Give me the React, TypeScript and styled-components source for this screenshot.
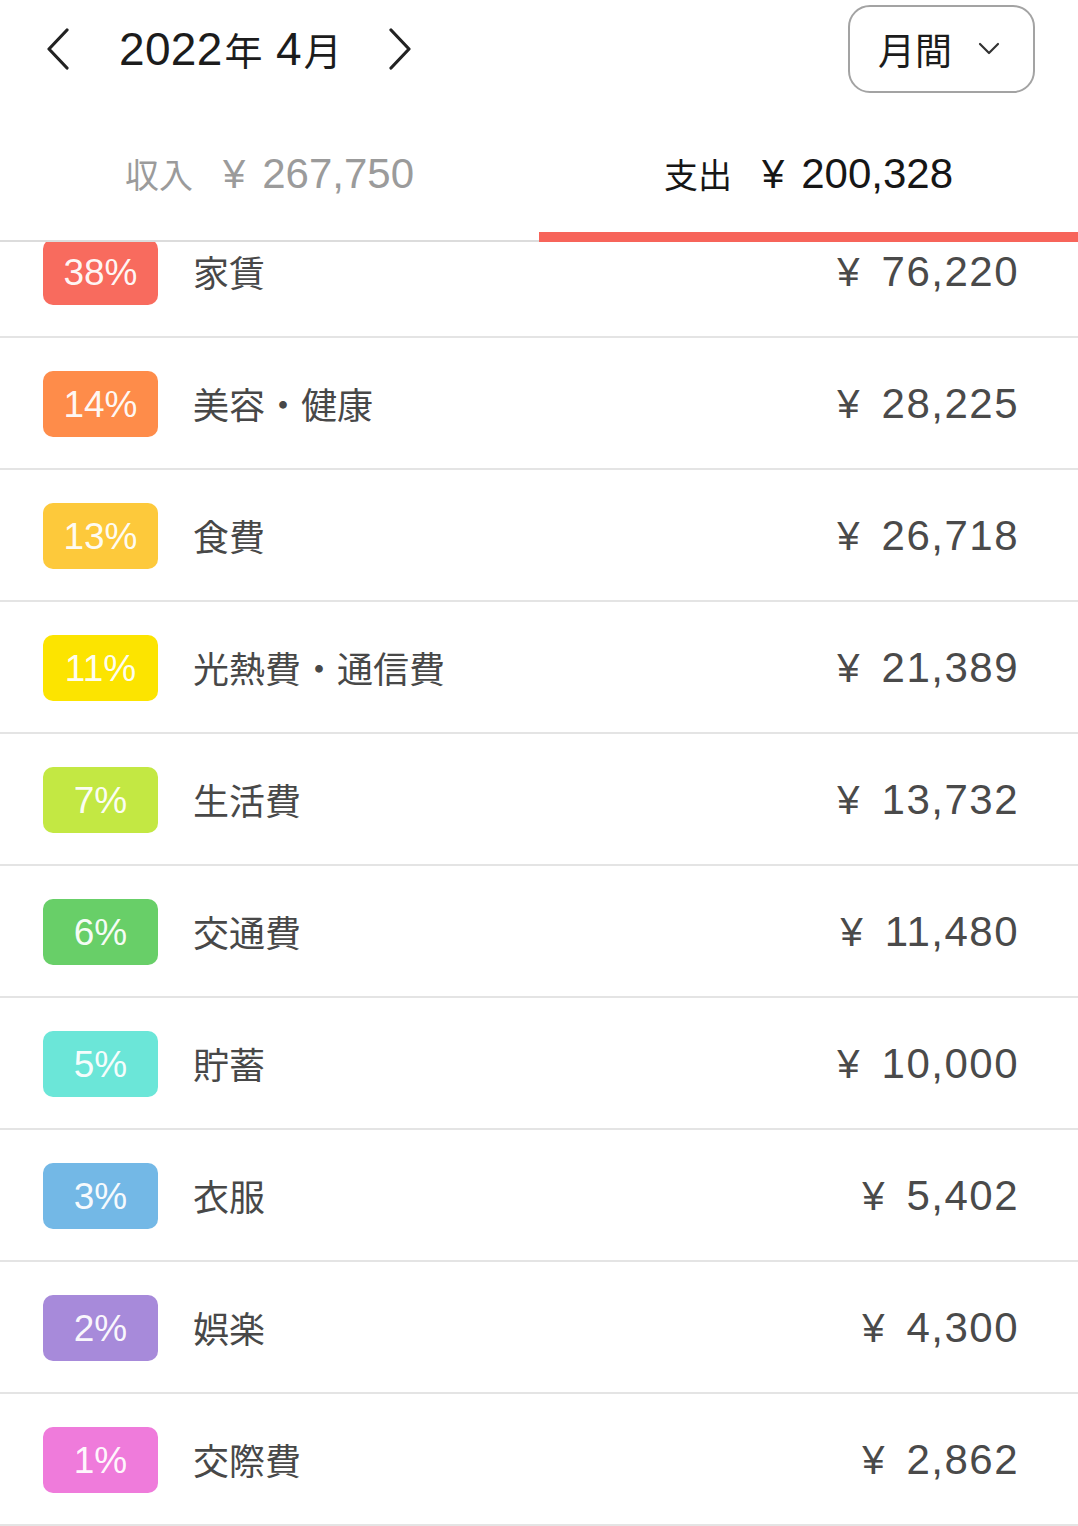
import React, { useLayoutEffect, useRef } from "react";
import styled, { createGlobalStyle } from "styled-components";

const GlobalStyle = createGlobalStyle`
  html, body { margin: 0; padding: 0; background: #ffffff; }
  body {
    font-family: "Liberation Sans", "Noto Sans CJK JP", sans-serif;
    -webkit-font-smoothing: antialiased;
  }
  * { box-sizing: border-box; }
`;

const Page = styled.div`
  display: flex;
  flex-direction: column;
  height: 100vh;
  background: #fff;
`;

const Header = styled.header`
  display: flex;
  align-items: center;
  height: 98px;
  padding: 0 43px 0 46px;
  flex-shrink: 0;
`;

const NavButton = styled.button`
  display: flex;
  align-items: center;
  justify-content: center;
  border: none;
  background: none;
  padding: 0;
  width: 24px;
  height: 42px;
  color: #222;
  cursor: pointer;
`;

const Title = styled.h1`
  margin: 0 46px 0 49px;
  font-weight: 400;
  font-size: 46px;
  line-height: 1;
  color: #1c1c1c;
  letter-spacing: 0.3px;
`;

const Unit = styled.span`
  font-family: "Noto Sans CJK JP", sans-serif;
  font-size: 38px;
  margin-left: 2px;
`;

const Spacer = styled.div`
  flex: 1;
`;

const PeriodSelect = styled.button`
  display: flex;
  align-items: center;
  width: 187px;
  height: 88px;
  padding: 0 0 0 28px;
  border: 2.5px solid #a3a3a3;
  border-radius: 22px;
  background: #fff;
  color: #1c1c1c;
  font-family: "Noto Sans CJK JP", sans-serif;
  font-size: 37px;
  line-height: 1;
  gap: 26px;
  cursor: pointer;
`;

const Tabs = styled.nav`
  display: flex;
  height: 144px;
  border-bottom: 2px solid #dcdcdc;
  flex-shrink: 0;
`;

const Tab = styled.div<{ $active?: boolean }>`
  position: relative;
  flex: 1;
  display: flex;
  align-items: center;
  justify-content: center;
  padding-top: 10px;
  color: ${(p) => (p.$active ? "#161616" : "#9b9b9b")};
  &::after {
    content: "";
    display: ${(p) => (p.$active ? "block" : "none")};
    position: absolute;
    left: 0;
    right: 0;
    bottom: -2px;
    height: 10px;
    background: #f7645a;
  }
`;

const TabLabel = styled.span`
  font-family: "Noto Sans CJK JP", sans-serif;
  font-size: 34px;
  line-height: 1;
  margin-right: 30px;
`;

const TabYen = styled.span`
  font-size: 40px;
  line-height: 1;
  margin-right: 17px;
`;

const TabAmount = styled.span`
  font-size: 42px;
  line-height: 1;
`;

const List = styled.ul`
  flex: 1;
  margin: 0;
  padding: 0;
  list-style: none;
  overflow-y: auto;
  scrollbar-width: none;
  &::-webkit-scrollbar { display: none; }
`;

const Row = styled.li`
  display: flex;
  align-items: center;
  height: 132px;
  padding: 0 59px 0 43px;
  border-bottom: 2px solid #e4e4e4;
`;

const Badge = styled.span<{ $color: string }>`
  display: flex;
  align-items: center;
  justify-content: center;
  width: 115px;
  height: 66px;
  border-radius: 10px;
  background: ${(p) => p.$color};
  color: rgba(255, 255, 255, 0.95);
  font-size: 37px;
  line-height: 1;
  flex-shrink: 0;
  margin-top: 2px;
`;

const Label = styled.span`
  margin-left: 35px;
  font-family: "Noto Sans CJK JP", sans-serif;
  font-size: 36px;
  line-height: 1;
  color: #484848;
`;

const Amount = styled.span`
  margin-left: auto;
  display: flex;
  align-items: center;
  color: #4a4a4a;
  line-height: 1;
  margin-top: 2px;
`;

const Yen = styled.span`
  font-size: 40px;
  margin-right: 22px;
`;

const Num = styled.span`
  font-size: 42px;
  letter-spacing: 1.5px;
`;

const ChevronIcon = ({ dir }: { dir: "left" | "right" }) => (
  <svg width="24" height="42" viewBox="0 0 24 42" fill="none">
    <polyline
      points={dir === "left" ? "21,2 3,21 21,40" : "3,2 21,21 3,40"}
      stroke="currentColor"
      strokeWidth="3.2"
      strokeLinecap="round"
      strokeLinejoin="round"
    />
  </svg>
);

const CaretDown = () => (
  <svg width="22" height="14" viewBox="0 0 22 14" fill="none">
    <polyline
      points="2,2 11,11 20,2"
      stroke="#333"
      strokeWidth="2.2"
      strokeLinecap="round"
      strokeLinejoin="round"
    />
  </svg>
);

type Item = { pct: string; color: string; label: string; amount: string };

const items: Item[] = [
  { pct: "38%", color: "#f86b5e", label: "家賃", amount: "76,220" },
  { pct: "14%", color: "#fe8c4a", label: "美容・健康", amount: "28,225" },
  { pct: "13%", color: "#fdc93b", label: "食費", amount: "26,718" },
  { pct: "11%", color: "#fce400", label: "光熱費・通信費", amount: "21,389" },
  { pct: "7%", color: "#c3e843", label: "生活費", amount: "13,732" },
  { pct: "6%", color: "#68cf68", label: "交通費", amount: "11,480" },
  { pct: "5%", color: "#6be6d8", label: "貯蓄", amount: "10,000" },
  { pct: "3%", color: "#73b8e6", label: "衣服", amount: "5,402" },
  { pct: "2%", color: "#a78ada", label: "娯楽", amount: "4,300" },
  { pct: "1%", color: "#ef7bdb", label: "交際費", amount: "2,862" },
];

export default function App() {
  const listRef = useRef<HTMLUListElement>(null);

  useLayoutEffect(() => {
    if (listRef.current) listRef.current.scrollTop = 36;
  }, []);

  return (
    <>
      <GlobalStyle />
      <Page>
        <Header>
          <NavButton aria-label="前の月">
            <ChevronIcon dir="left" />
          </NavButton>
          <Title>
            2022<Unit>年</Unit> 4<Unit>月</Unit>
          </Title>
          <NavButton aria-label="次の月">
            <ChevronIcon dir="right" />
          </NavButton>
          <Spacer />
          <PeriodSelect>
            月間
            <CaretDown />
          </PeriodSelect>
        </Header>
        <Tabs>
          <Tab>
            <TabLabel>収入</TabLabel>
            <TabYen>¥</TabYen>
            <TabAmount>267,750</TabAmount>
          </Tab>
          <Tab $active>
            <TabLabel>支出</TabLabel>
            <TabYen>¥</TabYen>
            <TabAmount>200,328</TabAmount>
          </Tab>
        </Tabs>
        <List ref={listRef}>
          {items.map((it) => (
            <Row key={it.label}>
              <Badge $color={it.color}>{it.pct}</Badge>
              <Label>{it.label}</Label>
              <Amount>
                <Yen>¥</Yen>
                <Num>{it.amount}</Num>
              </Amount>
            </Row>
          ))}
        </List>
      </Page>
    </>
  );
}
